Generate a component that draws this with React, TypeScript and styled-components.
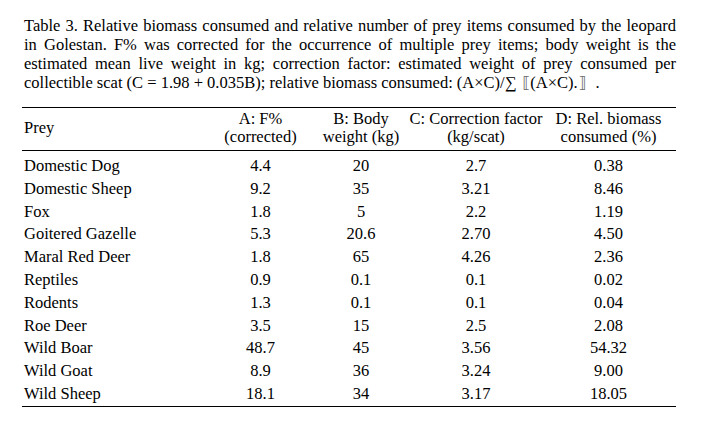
import React from 'react';
import styled, { createGlobalStyle } from 'styled-components';

const GlobalStyle = createGlobalStyle`
  html, body {
    margin: 0;
    padding: 0;
    background: #ffffff;
  }
  body {
    font-family: "Liberation Serif", "Times New Roman", serif;
    color: #000;
  }
`;

const Page = styled.div`
  width: 708px;
  height: 432px;
  padding: 16px 0 0 22px;
  box-sizing: border-box;
`;

const Caption = styled.div`
  width: 652px;
  margin-left: 2px;
  font-size: 16.5px;
  line-height: 19px;
`;

const CaptionLine = styled.div<{ $last?: boolean }>`
  text-align: ${(p) => (p.$last ? 'left' : 'justify')};
  text-align-last: ${(p) => (p.$last ? 'left' : 'justify')};
  word-spacing: ${(p) => (p.$last ? '0' : '-1px')};
  white-space: nowrap;
`;

const Bracket = styled.span<{ $open?: boolean }>`
  display: inline-block;
  font-family: "DejaVu Sans", sans-serif;
  font-size: 16px;
  color: #6b6b6b;
  margin: ${(p) => (p.$open ? '0 0 0 6px' : '0 9px 0 1px')};
`;

const Table = styled.div`
  margin-top: 15px;
  width: 654px;
  border-top: 1px solid #000;
  border-bottom: 1px solid #000;
  font-size: 16.5px;
`;

const Grid = styled.div`
  display: grid;
  grid-template-columns: 188px 101px 100px 130px 135px;
`;

const HeadRow = styled(Grid)`
  padding: 2px 0 4px;
  line-height: 18px;
  border-bottom: 1px solid #000;
`;

const Body = styled.div`
  padding-top: 4px;
`;

const Row = styled(Grid)`
  height: 22.8px;
  line-height: 22.8px;
`;

const Cell = styled.div<{ $left?: boolean }>`
  display: flex;
  flex-direction: column;
  justify-content: center;
  align-items: ${(p) => (p.$left ? 'flex-start' : 'center')};
  padding-left: ${(p) => (p.$left ? '2px' : '0')};
  white-space: nowrap;
  text-align: center;
`;

const rows: [string, string, string, string, string][] = [
  ['Domestic Dog', '4.4', '20', '2.7', '0.38'],
  ['Domestic Sheep', '9.2', '35', '3.21', '8.46'],
  ['Fox', '1.8', '5', '2.2', '1.19'],
  ['Goitered Gazelle', '5.3', '20.6', '2.70', '4.50'],
  ['Maral Red Deer', '1.8', '65', '4.26', '2.36'],
  ['Reptiles', '0.9', '0.1', '0.1', '0.02'],
  ['Rodents', '1.3', '0.1', '0.1', '0.04'],
  ['Roe Deer', '3.5', '15', '2.5', '2.08'],
  ['Wild Boar', '48.7', '45', '3.56', '54.32'],
  ['Wild Goat', '8.9', '36', '3.24', '9.00'],
  ['Wild Sheep', '18.1', '34', '3.17', '18.05'],
];

export default function App() {
  return (
    <>
      <GlobalStyle />
      <Page>
        <Caption>
          <CaptionLine>
            Table 3. Relative biomass consumed and relative number of prey items consumed by the leopard
          </CaptionLine>
          <CaptionLine>
            in Golestan. F% was corrected for the occurrence of multiple prey items; body weight is the
          </CaptionLine>
          <CaptionLine>
            estimated mean live weight in kg; correction factor: estimated weight of prey consumed per
          </CaptionLine>
          <CaptionLine $last>
            collectible scat (C = 1.98 + 0.035B); relative biomass consumed: (A×C)/∑
            <Bracket $open>⟦</Bracket>(A×C).<Bracket>⟧</Bracket>.
          </CaptionLine>
        </Caption>
        <Table>
          <HeadRow>
            <Cell $left>Prey</Cell>
            <Cell>
              <span>A: F%</span>
              <span>(corrected)</span>
            </Cell>
            <Cell>
              <span>B: Body</span>
              <span>weight (kg)</span>
            </Cell>
            <Cell>
              <span>C: Correction factor</span>
              <span>(kg/scat)</span>
            </Cell>
            <Cell>
              <span>D: Rel. biomass</span>
              <span>consumed (%)</span>
            </Cell>
          </HeadRow>
          <Body>
            {rows.map((r) => (
              <Row key={r[0]}>
                <Cell $left>{r[0]}</Cell>
                <Cell>{r[1]}</Cell>
                <Cell>{r[2]}</Cell>
                <Cell>{r[3]}</Cell>
                <Cell>{r[4]}</Cell>
              </Row>
            ))}
          </Body>
        </Table>
      </Page>
    </>
  );
}
